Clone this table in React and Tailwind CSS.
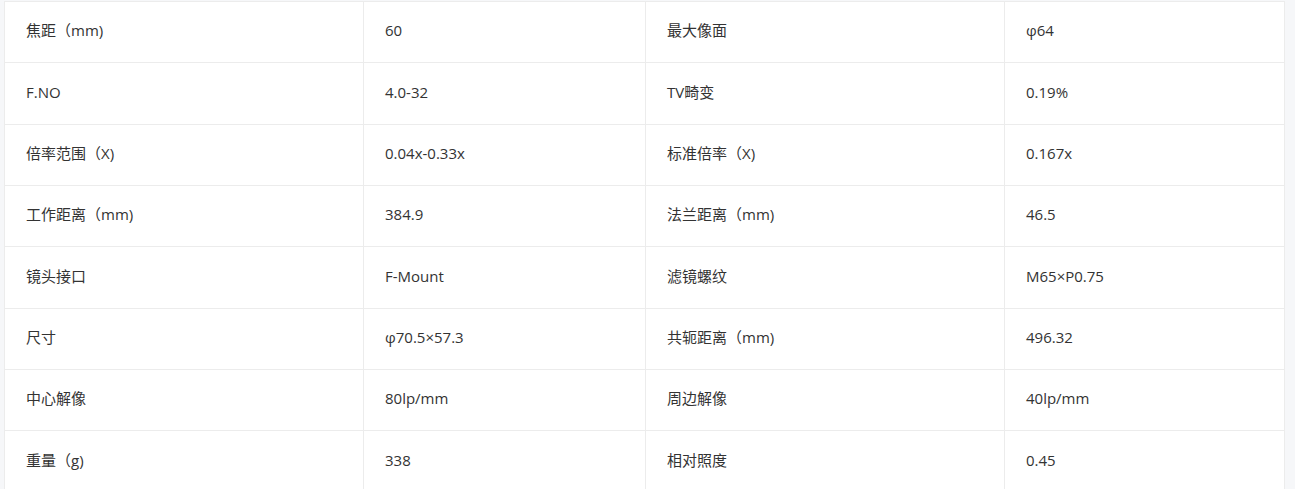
import React from "react";

const rows = [
  ["焦距（mm)", "60", "最大像面", "φ64"],
  ["F.NO", "4.0-32", "TV畸变", "0.19%"],
  ["倍率范围（X)", "0.04x-0.33x", "标准倍率（X)", "0.167x"],
  ["工作距离（mm)", "384.9", "法兰距离（mm)", "46.5"],
  ["镜头接口", "F-Mount", "滤镜螺纹", "M65×P0.75"],
  ["尺寸", "φ70.5×57.3", "共轭距离（mm)", "496.32"],
  ["中心解像", "80lp/mm", "周边解像", "40lp/mm"],
  ["重量（g)", "338", "相对照度", "0.45"],
];

export default function App() {
  return (
    <div
      className="w-[1295px] h-[489px] overflow-hidden bg-[#f6f7f9] pl-[4px] pt-px"
      style={{ fontFamily: '"Open Sans", "Noto Sans CJK SC", sans-serif' }}
    >
      <div className="w-[1281px] bg-white border border-[#ececec] border-b-0">
        {rows.map((r, i) => (
          <div
            key={i}
            className="grid grid-cols-[359px_282px_359px_280px] h-[61.33px] border-b border-[#ececec] text-[15px] text-[#333333]"
          >
            {r.map((c, j) => (
              <div
                key={j}
                className={`flex items-center pl-[21px] pb-[3px] ${j < 3 ? "border-r border-[#ececec]" : ""}`}
              >
                {c}
              </div>
            ))}
          </div>
        ))}
      </div>
    </div>
  );
}
